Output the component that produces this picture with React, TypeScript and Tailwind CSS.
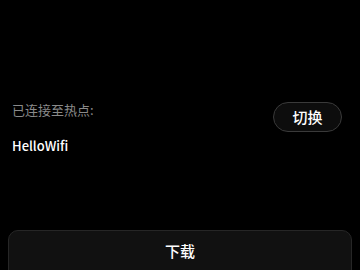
export default function App() {
  return (
    <div
      className="flex h-[270px] w-[360px] flex-col overflow-hidden bg-black text-white"
      style={{ fontFamily: '"Noto Sans CJK SC", "Noto Sans", sans-serif' }}
    >
      <div className="flex items-start justify-between pt-[100px] pl-[12px] pr-[18px]">
        <div className="flex flex-col">
          <span className="text-[13px] leading-[20px] text-[#8a8a8a]">已连接至热点:</span>
          <span className="mt-[16px] text-[13px] leading-[20px] font-medium text-white">HelloWifi</span>
        </div>
        <button
          type="button"
          className="mt-[2px] flex h-[30px] w-[69px] items-center justify-center rounded-full border border-[#3a3a3a] bg-[#0d0d0d] text-[15px] font-medium text-white"
        >
          切换
        </button>
      </div>
      <div className="mt-[74px] px-[8px]">
        <button
          type="button"
          className="flex h-[50px] w-full items-start justify-center rounded-[10px] border border-[#262626] bg-[#111111] pt-[9px] text-[15px] font-medium text-white"
        >
          下载
        </button>
      </div>
    </div>
  )
}
